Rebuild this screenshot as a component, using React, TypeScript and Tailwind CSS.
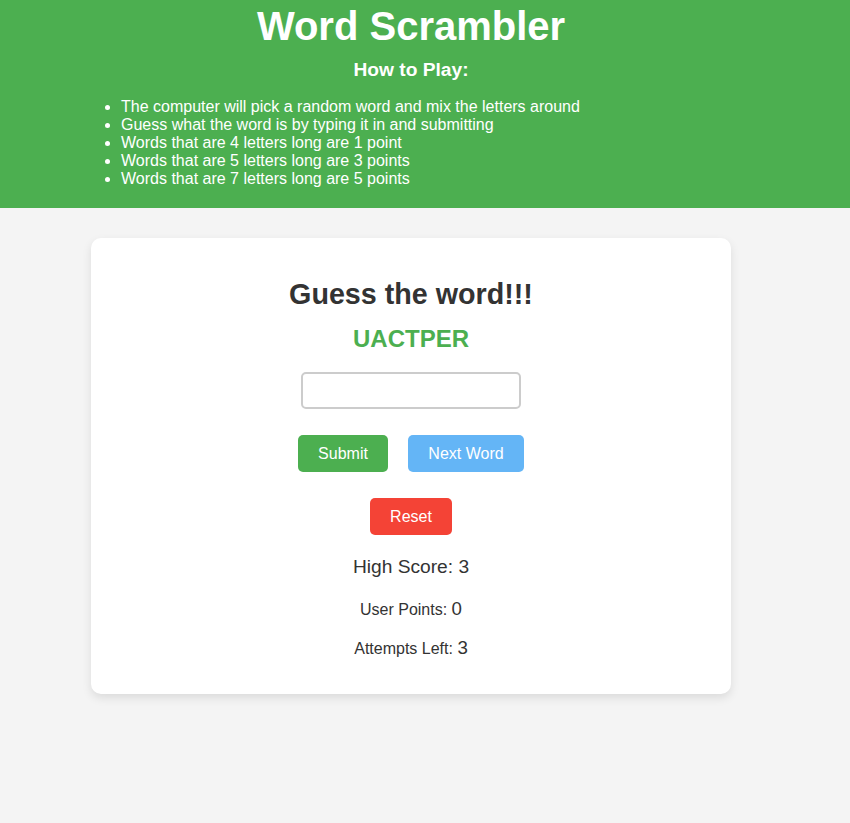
export default function App() {
    return (
        <div className="min-h-[823px] bg-[#f4f4f4] text-[#333] font-['Liberation_Sans',Arial,sans-serif]">
            {/* Header */}
            <header className="bg-[#4caf50] text-white h-[208px] pt-[3px]">
                <div className="w-[640px] ml-[91px] text-center">
                    <h1 className="text-[40px] font-bold leading-[46px]">Word Scrambler</h1>
                    <h3 className="text-[19.2px] font-bold leading-[22px] mt-[10px]">How to Play:</h3>
                </div>
                <ul className="list-disc pl-[40px] ml-[81px] mt-[17px] text-[16px] leading-[18px]">
                    <li>The computer will pick a random word and mix the letters around</li>
                    <li>Guess what the word is by typing it in and submitting</li>
                    <li>Words that are 4 letters long are 1 point</li>
                    <li>Words that are 5 letters long are 3 points</li>
                    <li>Words that are 7 letters long are 5 points</li>
                </ul>
            </header>

            {/* Game Card */}
            <div className="w-[640px] ml-[91px] mt-[30px] bg-white rounded-[10px] shadow-[0_4px_10px_rgba(0,0,0,0.1)] h-[456px] pt-[38px] flex flex-col items-center">
                <h2 className="text-[28.7px] font-bold leading-[36px]">Guess the word!!!</h2>
                <p className="text-[24px] font-bold text-[#4caf50] leading-[28px] mt-[13px]">UACTPER</p>
                <input
                    type="text"
                    className="mt-[19px] w-[220px] h-[37px] border-2 border-[#ccc] rounded-[5px] px-2 text-[16px] outline-none"
                />
                <div className="flex gap-[20px] mt-[26px]">
                    <button className="w-[90px] h-[37px] rounded-[5px] bg-[#4caf50] text-white text-[16px]">Submit</button>
                    <button className="w-[116px] h-[37px] rounded-[5px] bg-[#64b5f6] text-white text-[16px]">Next Word</button>
                </div>
                <button className="mt-[26px] w-[82px] h-[37px] rounded-[5px] bg-[#f44336] text-white text-[16px]">Reset</button>
                <p className="mt-[21px] text-[19.2px] leading-[22px]">High Score: 3</p>
                <p className="mt-[20px] text-[16px] leading-[22px]">User Points: <span className="text-[18.7px]">0</span></p>
                <p className="mt-[16px] text-[16px] leading-[22px]">Attempts Left: <span className="text-[18.7px]">3</span></p>
            </div>
        </div>
    );
}
